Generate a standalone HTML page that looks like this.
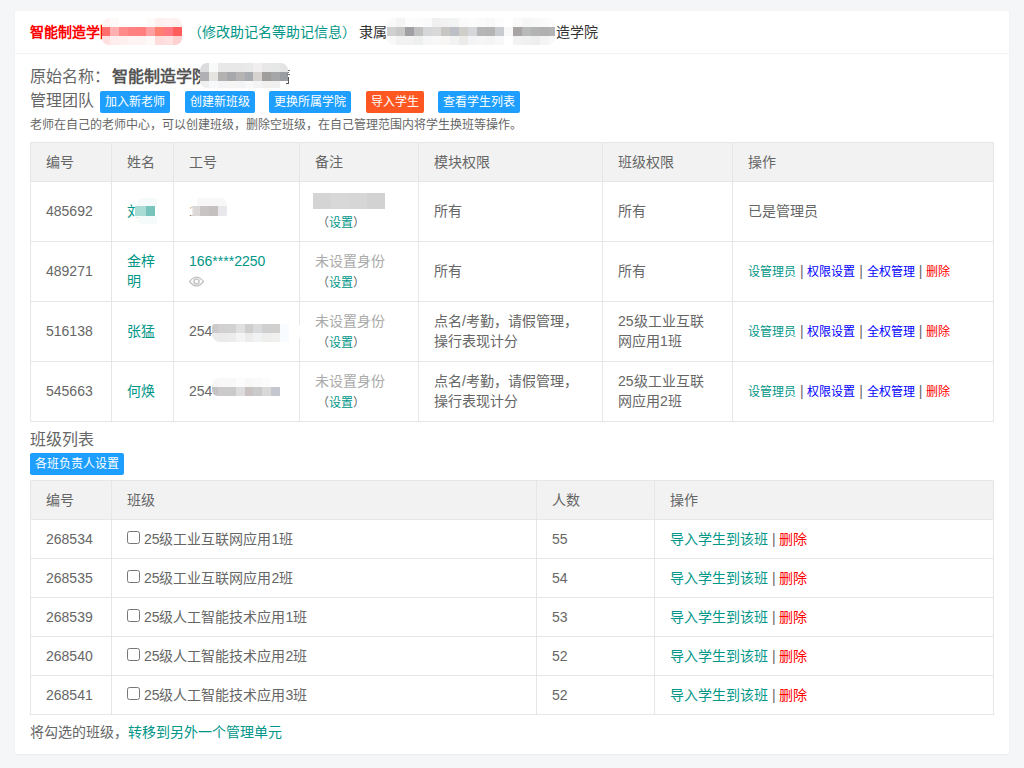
<!DOCTYPE html>
<html lang="zh-CN">
<head>
<meta charset="utf-8">
<title>管理团队</title>
<style>
*{box-sizing:border-box}
html,body{margin:0;padding:0}
body{width:1024px;height:768px;overflow:hidden;background:#f4f6f8;font-family:"Liberation Sans",sans-serif;font-size:14px;line-height:24px;color:#666}
a{text-decoration:none;color:#009688}
.card{position:absolute;left:15px;top:11px;width:994px;height:743px;background:#fff;border-radius:2px;box-shadow:0 1px 2px 0 rgba(0,0,0,.05)}
.card-header{position:absolute;left:0;top:0;width:994px;height:43px;line-height:42px;padding:0 15px;border-bottom:1px solid #f3f3f3;color:#333;font-size:14px;white-space:nowrap;overflow:hidden}
.card-body{position:absolute;left:15px;top:43px;width:964px;height:700px}
.row{position:absolute;left:0;white-space:nowrap;height:24px;line-height:24px}
.abs{position:absolute;white-space:nowrap}
.title-red{color:#ff0000;font-weight:bold}
.h16{font-size:16px}
.btn{position:absolute;top:0;height:22px;line-height:22px;padding:0;font-size:12px;color:#fff;background:#1e9fff;border-radius:2px;text-align:center;white-space:nowrap;overflow:hidden}
.btn.danger{background:#ff5722}
.desc{font-size:12px}
table{position:absolute;left:0;width:964px;border-collapse:separate;border-spacing:0;table-layout:fixed;border-top:1px solid #e6e6e6;border-left:1px solid #e6e6e6;color:#666}
th,td{border-right:1px solid #e6e6e6;border-bottom:1px solid #e6e6e6;padding:0 15px;font-size:14px;line-height:20px;text-align:left;font-weight:normal;white-space:nowrap;overflow:hidden;vertical-align:middle}
th{height:39px;background:#f2f2f2}
#t1 td{height:60px;padding-bottom:2px}
#t2 td{height:39px}
.j{display:inline-block;white-space:nowrap;text-align:justify;text-align-last:justify;vertical-align:baseline}
.muted{color:#aaa}
.s12{font-size:12px}
.set{position:relative;top:1px;margin-left:2px}
.bz{padding-top:2px}
#t1 td.ops{padding-bottom:0}
.blue{color:#0000ff}
.red{color:#ff0000}
.mz{position:absolute;display:block;border-radius:7px;shape-rendering:crispEdges}
.cb{-webkit-appearance:none;appearance:none;display:inline-block;width:13px;height:13px;margin:0;padding:0;border:1px solid #767676;border-radius:2.5px;background:#fff;vertical-align:0}
</style>
</head>
<body>
<div class="card">
  <div class="card-header">
    <span class="abs title-red" style="left:15px;top:0"><span class="j" style="width:84.02px">智能制造学院</span></span>
    <a class="abs" href="#" style="left:173px;top:0"><span class="j" style="width:168.02px">（修改助记名等助记信息）</span></a>
    <span class="abs" style="left:344px;top:0"><span class="j" style="width:28.02px">隶属</span></span>
    <span class="abs" style="left:541px;top:0"><span class="j" style="width:42.02px">造学院</span></span>
  </div>
  <div class="card-body">
    <div class="row h16" style="top:11px"><span class="j" style="width:80.02px">原始名称：</span><b style="color:#555;margin-left:2px"><span class="j" style="width:96.02px">智能制造学院</span></b></div>
    <div class="row h16" style="top:35px"><span class="j" style="width:64.02px">管理团队</span></div>
    <div class="abs" style="left:0;top:37px;height:22px;width:520px">
      <a class="btn" href="#" style="left:70px;width:70px"><span class="j" style="width:60.02px">加入新老师</span></a>
      <a class="btn" href="#" style="left:155px;width:70px"><span class="j" style="width:60.02px">创建新班级</span></a>
      <a class="btn" href="#" style="left:239px;width:82px"><span class="j" style="width:72.02px">更换所属学院</span></a>
      <a class="btn danger" href="#" style="left:336px;width:58px"><span class="j" style="width:48.02px">导入学生</span></a>
      <a class="btn" href="#" style="left:408px;width:82px"><span class="j" style="width:72.02px">查看学生列表</span></a>
    </div>
    <div class="row desc" style="top:59px"><span class="j" style="width:492.02px">老师在自己的老师中心，可以创建班级，删除空班级，在自己管理范围内将学生换班等操作。</span></div>

    <table id="t1" style="top:88px">
      <colgroup><col style="width:81px"><col style="width:62px"><col style="width:126px"><col style="width:119px"><col style="width:184px"><col style="width:130px"><col style="width:261px"></colgroup>
      <thead>
        <tr><th><span class="j" style="width:28.02px">编号</span></th><th><span class="j" style="width:28.02px">姓名</span></th><th><span class="j" style="width:28.02px">工号</span></th><th><span class="j" style="width:28.02px">备注</span></th><th><span class="j" style="width:56.02px">模块权限</span></th><th><span class="j" style="width:56.02px">班级权限</span></th><th><span class="j" style="width:28.02px">操作</span></th></tr>
      </thead>
      <tbody>
        <tr>
          <td>485692</td>
          <td><a href="#"><span class="j" style="width:14.02px">刘</span></a></td>
          <td>1</td>
          <td class="bz"><span class="muted">&nbsp;</span><br><span class="s12 set"><span class="j" style="width:12.02px">（</span><a href="#"><span class="j" style="width:24.02px">设置</span></a><span class="j" style="width:12.02px">）</span></span></td>
          <td><span class="j" style="width:28.02px">所有</span></td>
          <td><span class="j" style="width:28.02px">所有</span></td>
          <td><span class="j" style="width:70.02px">已是管理员</span></td>
        </tr>
        <tr>
          <td>489271</td>
          <td><a href="#"><span class="j" style="width:28.02px">金梓</span><br><span class="j" style="width:14.02px">明</span></a></td>
          <td><a href="#">166****2250</a><br><svg width="15" height="11" viewBox="0 0 15 11" style="vertical-align:middle;position:relative;top:-0.5px"><path d="M0.5 5.5Q7.5 -3.4 14.5 5.5Q7.5 14.4 0.5 5.5Z" fill="none" stroke="#c2c2c2" stroke-width="1.3" stroke-linejoin="round"/><circle cx="7.5" cy="5.5" r="2.55" fill="none" stroke="#c6c6c6" stroke-width="1.6"/></svg></td>
          <td class="bz"><span class="muted"><span class="j" style="width:70.02px">未设置身份</span></span><br><span class="s12 set"><span class="j" style="width:12.02px">（</span><a href="#"><span class="j" style="width:24.02px">设置</span></a><span class="j" style="width:12.02px">）</span></span></td>
          <td><span class="j" style="width:28.02px">所有</span></td>
          <td><span class="j" style="width:28.02px">所有</span></td>
          <td class="ops"><a class="s12" href="#"><span class="j" style="width:48.02px">设管理员</span></a> | <a class="s12 blue" href="#"><span class="j" style="width:48.02px">权限设置</span></a> | <a class="s12 blue" href="#"><span class="j" style="width:48.02px">全权管理</span></a> | <a class="s12 red" href="#"><span class="j" style="width:24.02px">删除</span></a></td>
        </tr>
        <tr>
          <td>516138</td>
          <td><a href="#"><span class="j" style="width:28.02px">张猛</span></a></td>
          <td>254</td>
          <td class="bz"><span class="muted"><span class="j" style="width:70.02px">未设置身份</span></span><br><span class="s12 set"><span class="j" style="width:12.02px">（</span><a href="#"><span class="j" style="width:24.02px">设置</span></a><span class="j" style="width:12.02px">）</span></span></td>
          <td><span class="j" style="width:143.91px">点名/考勤，请假管理，</span><br><span class="j" style="width:84.02px">操行表现计分</span></td>
          <td><span class="j" style="width:85.6px">25级工业互联</span><br><span class="j" style="width:63.82px">网应用1班</span></td>
          <td class="ops"><a class="s12" href="#"><span class="j" style="width:48.02px">设管理员</span></a> | <a class="s12 blue" href="#"><span class="j" style="width:48.02px">权限设置</span></a> | <a class="s12 blue" href="#"><span class="j" style="width:48.02px">全权管理</span></a> | <a class="s12 red" href="#"><span class="j" style="width:24.02px">删除</span></a></td>
        </tr>
        <tr>
          <td>545663</td>
          <td><a href="#"><span class="j" style="width:28.02px">何焕</span></a></td>
          <td>254</td>
          <td class="bz"><span class="muted"><span class="j" style="width:70.02px">未设置身份</span></span><br><span class="s12 set"><span class="j" style="width:12.02px">（</span><a href="#"><span class="j" style="width:24.02px">设置</span></a><span class="j" style="width:12.02px">）</span></span></td>
          <td><span class="j" style="width:143.91px">点名/考勤，请假管理，</span><br><span class="j" style="width:84.02px">操行表现计分</span></td>
          <td><span class="j" style="width:85.6px">25级工业互联</span><br><span class="j" style="width:63.82px">网应用2班</span></td>
          <td class="ops"><a class="s12" href="#"><span class="j" style="width:48.02px">设管理员</span></a> | <a class="s12 blue" href="#"><span class="j" style="width:48.02px">权限设置</span></a> | <a class="s12 blue" href="#"><span class="j" style="width:48.02px">全权管理</span></a> | <a class="s12 red" href="#"><span class="j" style="width:24.02px">删除</span></a></td>
        </tr>
      </tbody>
    </table>

    <div class="row h16" style="top:374px"><span class="j" style="width:64.02px">班级列表</span></div>
    <div class="abs" style="left:0;top:399px;height:22px;width:200px">
      <a class="btn" href="#" style="left:0;width:94px"><span class="j" style="width:84.02px">各班负责人设置</span></a>
    </div>

    <table id="t2" style="top:426px">
      <colgroup><col style="width:81px"><col style="width:425px"><col style="width:118px"><col style="width:339px"></colgroup>
      <thead>
        <tr><th><span class="j" style="width:28.02px">编号</span></th><th><span class="j" style="width:28.02px">班级</span></th><th><span class="j" style="width:28.02px">人数</span></th><th><span class="j" style="width:28.02px">操作</span></th></tr>
      </thead>
      <tbody>
        <tr><td>268534</td><td><input type="checkbox" class="cb"> <span class="j" style="width:149.38px">25级工业互联网应用1班</span></td><td>55</td><td><a href="#"><span class="j" style="width:98.02px">导入学生到该班</span></a> | <a class="red" href="#"><span class="j" style="width:28.02px">删除</span></a></td></tr>
        <tr><td>268535</td><td><input type="checkbox" class="cb"> <span class="j" style="width:149.38px">25级工业互联网应用2班</span></td><td>54</td><td><a href="#"><span class="j" style="width:98.02px">导入学生到该班</span></a> | <a class="red" href="#"><span class="j" style="width:28.02px">删除</span></a></td></tr>
        <tr><td>268539</td><td><input type="checkbox" class="cb"> <span class="j" style="width:163.38px">25级人工智能技术应用1班</span></td><td>53</td><td><a href="#"><span class="j" style="width:98.02px">导入学生到该班</span></a> | <a class="red" href="#"><span class="j" style="width:28.02px">删除</span></a></td></tr>
        <tr><td>268540</td><td><input type="checkbox" class="cb"> <span class="j" style="width:163.38px">25级人工智能技术应用2班</span></td><td>52</td><td><a href="#"><span class="j" style="width:98.02px">导入学生到该班</span></a> | <a class="red" href="#"><span class="j" style="width:28.02px">删除</span></a></td></tr>
        <tr><td>268541</td><td><input type="checkbox" class="cb"> <span class="j" style="width:163.38px">25级人工智能技术应用3班</span></td><td>52</td><td><a href="#"><span class="j" style="width:98.02px">导入学生到该班</span></a> | <a class="red" href="#"><span class="j" style="width:28.02px">删除</span></a></td></tr>
      </tbody>
    </table>

    <div class="row" style="top:666px"><span class="j" style="width:98.02px">将勾选的班级，</span><a href="#"><span class="j" style="width:154.02px">转移到另外一个管理单元</span></a></div>
  </div>

  <!-- privacy mosaics -->
  <svg class="mz" width="80" height="27" viewBox="0 0 80 27" style="left:87px;top:7px" aria-hidden="true"><rect x="0" y="0" width="8" height="9" fill="#fff4f4"/><rect x="8" y="0" width="9" height="9" fill="#fffafa"/><rect x="17" y="0" width="9" height="9" fill="#ffffff"/><rect x="26" y="0" width="9" height="9" fill="#ffffff"/><rect x="35" y="0" width="9" height="9" fill="#ffffff"/><rect x="44" y="0" width="9" height="9" fill="#fffafa"/><rect x="53" y="0" width="9" height="9" fill="#fff0f0"/><rect x="62" y="0" width="9" height="9" fill="#fff2f2"/><rect x="71" y="0" width="9" height="9" fill="#fff0f0"/><rect x="0" y="9" width="8" height="9" fill="#ff6e6e"/><rect x="8" y="9" width="9" height="9" fill="#ffb0b0"/><rect x="17" y="9" width="9" height="9" fill="#ff8a8a"/><rect x="26" y="9" width="9" height="9" fill="#ff8080"/><rect x="35" y="9" width="9" height="9" fill="#ff7e7e"/><rect x="44" y="9" width="9" height="9" fill="#ffa0a0"/><rect x="53" y="9" width="9" height="9" fill="#ff8070"/><rect x="62" y="9" width="9" height="9" fill="#ff7880"/><rect x="71" y="9" width="9" height="9" fill="#ff5c5c"/><rect x="0" y="18" width="8" height="9" fill="#ffe0e0"/><rect x="8" y="18" width="9" height="9" fill="#ffecec"/><rect x="17" y="18" width="9" height="9" fill="#fff0f0"/><rect x="26" y="18" width="9" height="9" fill="#fff4f4"/><rect x="35" y="18" width="9" height="9" fill="#fff4f4"/><rect x="44" y="18" width="9" height="9" fill="#fff8f8"/><rect x="53" y="18" width="9" height="9" fill="#ffdcdc"/><rect x="62" y="18" width="9" height="9" fill="#ffe0e0"/><rect x="71" y="18" width="9" height="9" fill="#ffd0d0"/></svg>
  <svg class="mz" width="88" height="25" viewBox="0 0 88 25" style="left:185px;top:52px" aria-hidden="true"><rect x="0" y="0" width="9" height="9" fill="#dcdcde"/><rect x="9" y="0" width="9" height="9" fill="#f8fafa"/><rect x="18" y="0" width="9" height="9" fill="#e8e8e8"/><rect x="27" y="0" width="9" height="9" fill="#e8e8e8"/><rect x="36" y="0" width="9" height="9" fill="#e8e8e8"/><rect x="45" y="0" width="8" height="9" fill="#e8eaea"/><rect x="53" y="0" width="9" height="9" fill="#f0eeee"/><rect x="62" y="0" width="9" height="9" fill="#e8e8e8"/><rect x="71" y="0" width="9" height="9" fill="#e6e8e8"/><rect x="80" y="0" width="8" height="9" fill="#e4e4e4"/><rect x="0" y="9" width="9" height="9" fill="#b0b0b4"/><rect x="9" y="9" width="9" height="9" fill="#e6e4e0"/><rect x="18" y="9" width="9" height="9" fill="#b4b2b0"/><rect x="27" y="9" width="9" height="9" fill="#a6a8ac"/><rect x="36" y="9" width="9" height="9" fill="#b6b4b2"/><rect x="45" y="9" width="8" height="9" fill="#a8acb0"/><rect x="53" y="9" width="9" height="9" fill="#d6d2d0"/><rect x="62" y="9" width="9" height="9" fill="#a09e9c"/><rect x="71" y="9" width="9" height="9" fill="#a4a6a8"/><rect x="80" y="9" width="8" height="9" fill="#9a9ea2"/><rect x="0" y="18" width="9" height="7" fill="#f0f0f0"/><rect x="9" y="18" width="9" height="7" fill="#f6f8fa"/><rect x="18" y="18" width="9" height="7" fill="#f4f4f6"/><rect x="27" y="18" width="9" height="7" fill="#f6f6f4"/><rect x="36" y="18" width="9" height="7" fill="#f2f4f6"/><rect x="45" y="18" width="8" height="7" fill="#f8f8f8"/><rect x="53" y="18" width="9" height="7" fill="#f4f4f4"/><rect x="62" y="18" width="9" height="7" fill="#f2f0ee"/><rect x="71" y="18" width="9" height="7" fill="#f0f0f0"/><rect x="80" y="18" width="8" height="7" fill="#ffffff"/></svg>
  <svg class="mz" width="168" height="27" viewBox="0 0 168 27" style="left:372px;top:7px" aria-hidden="true"><rect x="0" y="0" width="9" height="9" fill="#fafafa"/><rect x="9" y="0" width="9" height="9" fill="#f4f4f4"/><rect x="18" y="0" width="9" height="9" fill="#fcfcfc"/><rect x="27" y="0" width="9" height="9" fill="#fcfcfc"/><rect x="36" y="0" width="9" height="9" fill="#fafafa"/><rect x="45" y="0" width="9" height="9" fill="#f0f0f0"/><rect x="54" y="0" width="9" height="9" fill="#f2f2f2"/><rect x="63" y="0" width="9" height="9" fill="#f2f4f4"/><rect x="72" y="0" width="9" height="9" fill="#fafafa"/><rect x="81" y="0" width="9" height="9" fill="#fcfcfc"/><rect x="90" y="0" width="9" height="9" fill="#fafafa"/><rect x="99" y="0" width="9" height="9" fill="#f8f8f8"/><rect x="108" y="0" width="9" height="9" fill="#fcfcfc"/><rect x="117" y="0" width="9" height="9" fill="#ffffff"/><rect x="126" y="0" width="9" height="9" fill="#fafafa"/><rect x="135" y="0" width="9" height="9" fill="#f6f6f6"/><rect x="144" y="0" width="9" height="9" fill="#f8f8f8"/><rect x="153" y="0" width="9" height="9" fill="#fafafa"/><rect x="162" y="0" width="6" height="9" fill="#fcfcfc"/><rect x="0" y="9" width="9" height="9" fill="#d0d0d0"/><rect x="9" y="9" width="9" height="9" fill="#c8c8c8"/><rect x="18" y="9" width="9" height="9" fill="#a0a0a4"/><rect x="27" y="9" width="9" height="9" fill="#c0c0c0"/><rect x="36" y="9" width="9" height="9" fill="#d4d6d8"/><rect x="45" y="9" width="9" height="9" fill="#d8d8d8"/><rect x="54" y="9" width="9" height="9" fill="#c8c6c2"/><rect x="63" y="9" width="9" height="9" fill="#bcc0c6"/><rect x="72" y="9" width="9" height="9" fill="#d0cec8"/><rect x="81" y="9" width="9" height="9" fill="#d4d6da"/><rect x="90" y="9" width="9" height="9" fill="#b4b6b8"/><rect x="99" y="9" width="9" height="9" fill="#b4b4b4"/><rect x="108" y="9" width="9" height="9" fill="#c8ccd0"/><rect x="117" y="9" width="9" height="9" fill="#f8f8f8"/><rect x="126" y="9" width="9" height="9" fill="#a8a4a4"/><rect x="135" y="9" width="9" height="9" fill="#b8baba"/><rect x="144" y="9" width="9" height="9" fill="#b2b4b4"/><rect x="153" y="9" width="9" height="9" fill="#b0b0b0"/><rect x="162" y="9" width="6" height="9" fill="#b4b4b4"/><rect x="0" y="18" width="9" height="9" fill="#f8f8f8"/><rect x="9" y="18" width="9" height="9" fill="#f2f2f2"/><rect x="18" y="18" width="9" height="9" fill="#f2f2f2"/><rect x="27" y="18" width="9" height="9" fill="#eef0f0"/><rect x="36" y="18" width="9" height="9" fill="#f6f6f6"/><rect x="45" y="18" width="9" height="9" fill="#f8f8f8"/><rect x="54" y="18" width="9" height="9" fill="#f8f6f4"/><rect x="63" y="18" width="9" height="9" fill="#f2f2f2"/><rect x="72" y="18" width="9" height="9" fill="#ecebe9"/><rect x="81" y="18" width="9" height="9" fill="#f2f4f6"/><rect x="90" y="18" width="9" height="9" fill="#f6f6f6"/><rect x="99" y="18" width="9" height="9" fill="#f4f4f4"/><rect x="108" y="18" width="9" height="9" fill="#f8f8f8"/><rect x="117" y="18" width="9" height="9" fill="#ffffff"/><rect x="126" y="18" width="9" height="9" fill="#f2f2f2"/><rect x="135" y="18" width="9" height="9" fill="#f0f0f0"/><rect x="144" y="18" width="9" height="9" fill="#eeeeee"/><rect x="153" y="18" width="9" height="9" fill="#f4f4f4"/><rect x="162" y="18" width="6" height="9" fill="#f8f8f8"/></svg>
  <svg class="mz" width="22" height="26" viewBox="0 0 22 26" style="left:120px;top:187px;border-radius:9px 2px 2px 9px" aria-hidden="true"><rect x="2" y="0" width="27" height="8" fill="#f5fbfa"/><rect x="2" y="18" width="27" height="8" fill="#f4fbfa"/><rect x="0" y="8" width="11" height="10" fill="#a8dcd4"/><rect x="11" y="8" width="9" height="10" fill="#78c4bc"/></svg>
  <svg class="mz" width="37" height="22" viewBox="-4 0 37 22" style="left:175px;top:187px;border-radius:0 7px 7px 0" aria-hidden="true"><rect x="-3" y="5" width="3" height="16" fill="#ffffff" fill-opacity="0.72"/><rect x="3" y="0" width="30" height="8" fill="#f7f7f7"/><rect x="0" y="8" width="6" height="10" fill="#dcd8d8"/><rect x="6" y="8" width="9" height="10" fill="#c8c4c4"/><rect x="15" y="8" width="9" height="10" fill="#c4c0c0"/><rect x="24" y="8" width="9" height="10" fill="#e8e8ec"/></svg>
  <svg class="mz" width="72" height="16" viewBox="0 0 72 16" style="left:298px;top:182px;border-radius:0" aria-hidden="true"><rect x="0" y="0" width="18" height="16" fill="#d4d4d4"/><rect x="18" y="0" width="18" height="16" fill="#d8d8d8"/><rect x="36" y="0" width="18" height="16" fill="#d6d6d6"/><rect x="54" y="0" width="18" height="16" fill="#d2d2d2"/></svg>
  <svg class="mz" width="77" height="18" viewBox="0 0 77 18" style="left:197px;top:313px;border-radius:3px 0 0 8px" aria-hidden="true"><rect x="0" y="0" width="6" height="9" fill="#cccaca"/><rect x="6" y="0" width="9" height="9" fill="#d2d0d0"/><rect x="15" y="0" width="9" height="9" fill="#d2d2d2"/><rect x="24" y="0" width="9" height="9" fill="#e0e0e0"/><rect x="33" y="0" width="8" height="9" fill="#d0cecc"/><rect x="41" y="0" width="9" height="9" fill="#d8dadc"/><rect x="50" y="0" width="9" height="9" fill="#d0d0d0"/><rect x="59" y="0" width="9" height="9" fill="#d2d0ce"/><rect x="0" y="9" width="6" height="9" fill="#ebebeb"/><rect x="6" y="9" width="9" height="9" fill="#eaeaea"/><rect x="15" y="9" width="9" height="9" fill="#ececec"/><rect x="24" y="9" width="9" height="9" fill="#f4f4f4"/><rect x="33" y="9" width="8" height="9" fill="#ececec"/><rect x="41" y="9" width="9" height="9" fill="#f0f2f4"/><rect x="50" y="9" width="9" height="9" fill="#eeeeec"/><rect x="59" y="9" width="9" height="9" fill="#f0f0ee"/><rect x="68" y="0" width="9" height="18" fill="#f8fbff"/></svg>
  <svg class="mz" width="68" height="18" viewBox="0 0 68 18" style="left:197px;top:367px;border-radius:8px 0 0 6px" aria-hidden="true"><rect x="0" y="0" width="6" height="9" fill="#f6f6f6"/><rect x="6" y="0" width="9" height="9" fill="#f8f8f8"/><rect x="15" y="0" width="9" height="9" fill="#f8f8f8"/><rect x="24" y="0" width="9" height="9" fill="#fcfcfc"/><rect x="33" y="0" width="8" height="9" fill="#f8f8f8"/><rect x="41" y="0" width="9" height="9" fill="#fafafa"/><rect x="50" y="0" width="9" height="9" fill="#fcfcfc"/><rect x="59" y="0" width="9" height="9" fill="#ffffff"/><rect x="0" y="9" width="6" height="9" fill="#c4c2c2"/><rect x="6" y="9" width="9" height="9" fill="#cccaca"/><rect x="15" y="9" width="9" height="9" fill="#cacaca"/><rect x="24" y="9" width="9" height="9" fill="#dcdcdc"/><rect x="33" y="9" width="8" height="9" fill="#c8c2c0"/><rect x="41" y="9" width="9" height="9" fill="#c8cacc"/><rect x="50" y="9" width="9" height="9" fill="#dad8d6"/><rect x="59" y="9" width="9" height="9" fill="#c4c8ce"/></svg>
  <svg class="mz" width="5" height="16" viewBox="0 0 5 16" style="left:271px;top:58px;border-radius:0" aria-hidden="true"><path d="M2.6 7.5V14.3H0" fill="none" stroke="#5a5a5a" stroke-width="1.5"/><path d="M1.6 1.6h2M1.6 3.6h1.6M1 5.6h3" stroke="#666" stroke-width="0.9"/></svg>
  <svg class="mz" width="3" height="13" viewBox="0 0 3 13" style="left:283px;top:314px;border-radius:0" aria-hidden="true"><rect width="3" height="13" fill="#ffffff" fill-opacity="0.85"/></svg>
</div>
</body>
</html>
